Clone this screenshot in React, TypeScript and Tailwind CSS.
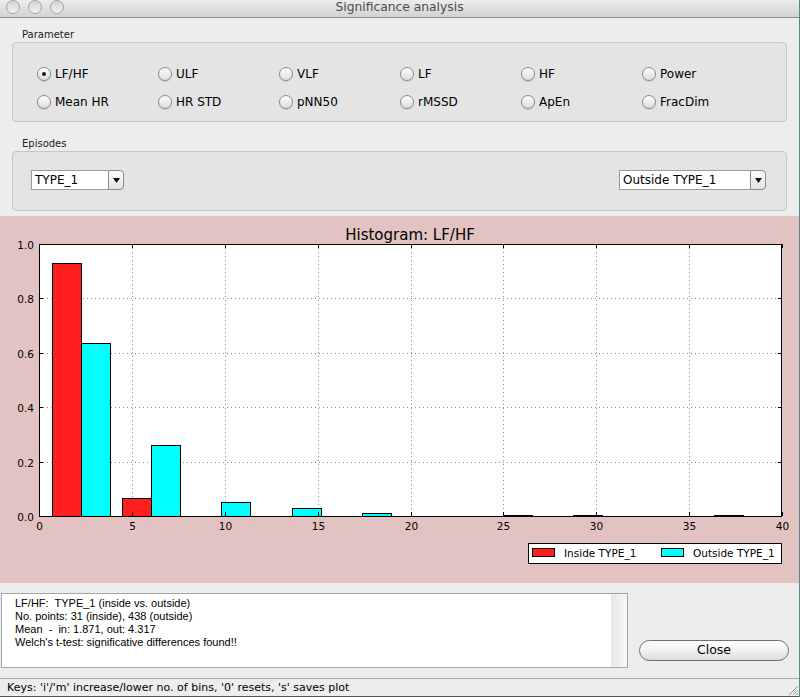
import React from 'react'

const PARAMS = [
  ['LF/HF', 'ULF', 'VLF', 'LF', 'HF', 'Power'],
  ['Mean HR', 'HR STD', 'pNN50', 'rMSSD', 'ApEn', 'FracDim'],
]

// plot geometry (px inside the pink panel)
const X0 = 39
const X1 = 782
const YT = 28
const YB = 300
const sx = (v: number) => X0 + (v / 40) * (X1 - X0)
const sy = (v: number) => YB - v * (YB - YT)

const BIN = 3.79
const START = 0.7
const BW = 1.545
const inside = [0.931, 0.065, 0, 0, 0, 0, 0, 0, 0, 0]
const outside = [0.637, 0.26, 0.053, 0.028, 0.01, 0, 0.004, 0.004, 0, 0.004]

function TitleBar() {
  return (
    <div className="relative h-[18px] shrink-0 border-b border-[#8c8c8c] bg-gradient-to-b from-[#ececec] to-[#d3d3d3]">
      <div className="flex items-center gap-[8px] pl-[6px] h-[14px]">
        {[0, 1, 2].map((i) => (
          <span
            key={i}
            className="w-[14px] h-[14px] rounded-full border border-[#a3a3a3] bg-gradient-to-b from-[#d4d4d4] to-[#f2f2f2]"
          />
        ))}
      </div>
      <div className="absolute inset-0 flex items-center justify-center text-[12.3px] text-[#4d4d4d] leading-none pb-[2px]">
        Significance analysis
      </div>
    </div>
  )
}

function Radio({ label, checked }: { label: string; checked?: boolean }) {
  return (
    <div className="flex items-center gap-[4px] h-[28px]">
      <span className="w-[14px] h-[14px] rounded-full border border-[#8a8a8a] bg-gradient-to-b from-[#fdfdfd] to-[#dedede] shadow-[0_1px_1px_rgba(0,0,0,0.12)] flex items-center justify-center">
        {checked && <span className="w-[4px] h-[4px] rounded-full bg-[#1e1e1e]" />}
      </span>
      <span className="text-[12px] leading-none text-black">{label}</span>
    </div>
  )
}

function Combo({ value, width }: { value: string; width: string }) {
  return (
    <div className={`flex h-[20px] ${width}`}>
      <div className="flex-1 bg-white border border-[#9c9c9c] border-r-0 pl-[3px] text-[12px] leading-[18px] text-black">
        {value}
      </div>
      <div className="w-[16px] border border-[#8a8a8a] rounded-r-[4px] bg-gradient-to-b from-white to-[#e4e4e4] flex items-center justify-center">
        <svg width="7" height="5" viewBox="0 0 7 5">
          <polygon points="0,0 7,0 3.5,5" fill="#111" />
        </svg>
      </div>
    </div>
  )
}

function Chart() {
  const xt = [0, 5, 10, 15, 20, 25, 30, 35, 40]
  const yt = [0, 0.2, 0.4, 0.6, 0.8, 1.0]
  const bars: { x: number; h: number; fill: string }[] = []
  inside.forEach((h, i) => {
    if (h > 0) bars.push({ x: START + i * BIN, h, fill: '#ff1f1f' })
  })
  outside.forEach((h, i) => {
    if (h > 0) bars.push({ x: START + i * BIN + BW, h, fill: '#00ffff' })
  })

  return (
    <svg width="799" height="367" viewBox="0 0 799 367" className="block">
      <text x="410" y="24" textAnchor="middle" className="font-['DejaVu_Sans'] text-[15px]" fill="#000">
        Histogram: LF/HF
      </text>
      <rect x={X0} y={YT} width={X1 - X0} height={YB - YT} fill="#fff" />
      {/* grid */}
      {xt.slice(1, -1).map((v) => (
        <line key={'gx' + v} x1={Math.round(sx(v)) + 0.5} x2={Math.round(sx(v)) + 0.5} y1={YT} y2={YB} stroke="#8a8a8a" strokeDasharray="1 3" />
      ))}
      {yt.slice(1, -1).map((v) => (
        <line key={'gy' + v} y1={Math.round(sy(v)) + 0.5} y2={Math.round(sy(v)) + 0.5} x1={X0} x2={X1} stroke="#8a8a8a" strokeDasharray="1 3" />
      ))}
      {/* bars */}
      {bars.map((b, i) => {
        const y = b.h < 0.01 ? YB - 1 : sy(b.h)
        return (
          <rect
            key={i}
            x={Math.round(sx(b.x)) + 0.5}
            y={Math.round(y) + 0.5}
            width={Math.round(sx(b.x + BW) - sx(b.x))}
            height={YB - Math.round(y)}
            fill={b.fill}
            stroke="#000"
            strokeWidth="1"
          />
        )
      })}
      {/* ticks */}
      {xt.map((v) => {
        const x = Math.round(sx(v)) + 0.5
        return (
          <g key={'tx' + v}>
            <line x1={x} x2={x} y1={YB} y2={YB - 4} stroke="#000" />
            <line x1={x} x2={x} y1={YT} y2={YT + 4} stroke="#000" />
            <text x={x} y={YB + 13.5} textAnchor="middle" className="font-['DejaVu_Sans'] text-[10.5px]" fill="#000">
              {v}
            </text>
          </g>
        )
      })}
      {yt.map((v) => {
        const y = Math.round(sy(v)) + 0.5
        return (
          <g key={'ty' + v}>
            <line x1={X0} x2={X0 + 4} y1={y} y2={y} stroke="#000" />
            <line x1={X1 - 4} x2={X1} y1={y} y2={y} stroke="#000" />
            <text x={34} y={y + 4} textAnchor="end" className="font-['DejaVu_Sans'] text-[10.5px]" fill="#000">
              {v.toFixed(1)}
            </text>
          </g>
        )
      })}
      <rect x={X0 + 0.5} y={YT + 0.5} width={X1 - X0 - 1} height={YB - YT} fill="none" stroke="#000" strokeWidth="1" />
      {/* legend */}
      <rect x="528.5" y="327.5" width="253" height="20" fill="#fff" stroke="#000" />
      <rect x="532.5" y="332.5" width="22" height="8" fill="#ff1f1f" stroke="#000" />
      <text x="564" y="341" className="font-['DejaVu_Sans'] text-[10.5px]" fill="#000">
        Inside TYPE_1
      </text>
      <rect x="661.5" y="332.5" width="22" height="8" fill="#00ffff" stroke="#000" />
      <text x="693" y="341" className="font-['DejaVu_Sans'] text-[10.5px]" fill="#000">
        Outside TYPE_1
      </text>
    </svg>
  )
}

export default function App() {
  return (
    <div className="w-[800px] h-[697px] overflow-hidden bg-[#ededed] font-['DejaVu_Sans',sans-serif] text-black flex flex-col border-r border-[#5b8792]">
      <TitleBar />

      {/* Parameter */}
      <div className="px-[12px]">
        <div className="h-[24px] pl-[10px] pt-[11px] text-[10px] leading-[12px] text-[#222]">Parameter</div>
        <div className="h-[80px] rounded-[4px] border border-[#c6c6c6] bg-[#e4e4e4] pt-[17px] pl-[24px]">
          {PARAMS.map((row, ri) => (
            <div key={ri} className="grid grid-cols-[repeat(6,121px)]">
              {row.map((p) => (
                <Radio key={p} label={p} checked={p === 'LF/HF'} />
              ))}
            </div>
          ))}
        </div>

        {/* Episodes */}
        <div className="h-[29px] pl-[10px] pt-[16px] text-[10px] leading-[12px] text-[#222]">Episodes</div>
        <div className="h-[60px] rounded-[4px] border border-[#c6c6c6] bg-[#e4e4e4] pt-[18px] pl-[18px] pr-[20px] flex items-start justify-between">
          <Combo value="TYPE_1" width="w-[93px]" />
          <Combo value="Outside TYPE_1" width="w-[147px]" />
        </div>
      </div>

      <div className="h-[5px] shrink-0" />

      {/* Plot */}
      <div className="h-[367px] shrink-0 bg-[#e3c3c2]">
        <Chart />
      </div>

      {/* Results */}
      <div className="h-[95px] shrink-0 flex items-start pt-[10px] pl-[1px] pr-[10px]">
        <div className="w-[627px] h-[75px] border border-[#a5a5a5] bg-white flex">
          <div className="flex-1 pl-[13px] pt-[3px] font-['Liberation_Sans',sans-serif] text-[11px] leading-[13px] whitespace-pre text-black">
            {"LF/HF:  TYPE_1 (inside vs. outside)\nNo. points: 31 (inside), 438 (outside)\nMean  -  in: 1.871, out: 4.317\nWelch's t-test: significative differences found!!"}
          </div>
          <div className="w-[16px] bg-gradient-to-r from-[#e6e6e6] to-[#f7f7f7]" />
        </div>
        <div className="flex-1 flex justify-end pt-[47px]">
          <button className="w-[150px] h-[21px] rounded-full border border-[#6f6f6f] bg-gradient-to-b from-white via-[#f2f2f2] to-[#dcdcdc] text-[12.5px] leading-none text-black">
            Close
          </button>
        </div>
      </div>

      {/* Status bar */}
      <div className="relative h-[19px] shrink-0 border-t border-[#a8a8a8] border-b border-b-[#555] pl-[7px] text-[11px] leading-[17px] text-black">
        Keys: 'i'/'m' increase/lower no. of bins, '0' resets, 's' saves plot
        <svg width="11" height="11" viewBox="0 0 11 11" className="absolute right-[1px] bottom-[1px]">
          <line x1="2" y1="11" x2="11" y2="2" stroke="#9a9a9a" />
          <line x1="6" y1="11" x2="11" y2="6" stroke="#9a9a9a" />
          <line x1="9" y1="11" x2="11" y2="9" stroke="#9a9a9a" />
        </svg>
      </div>
    </div>
  )
}
